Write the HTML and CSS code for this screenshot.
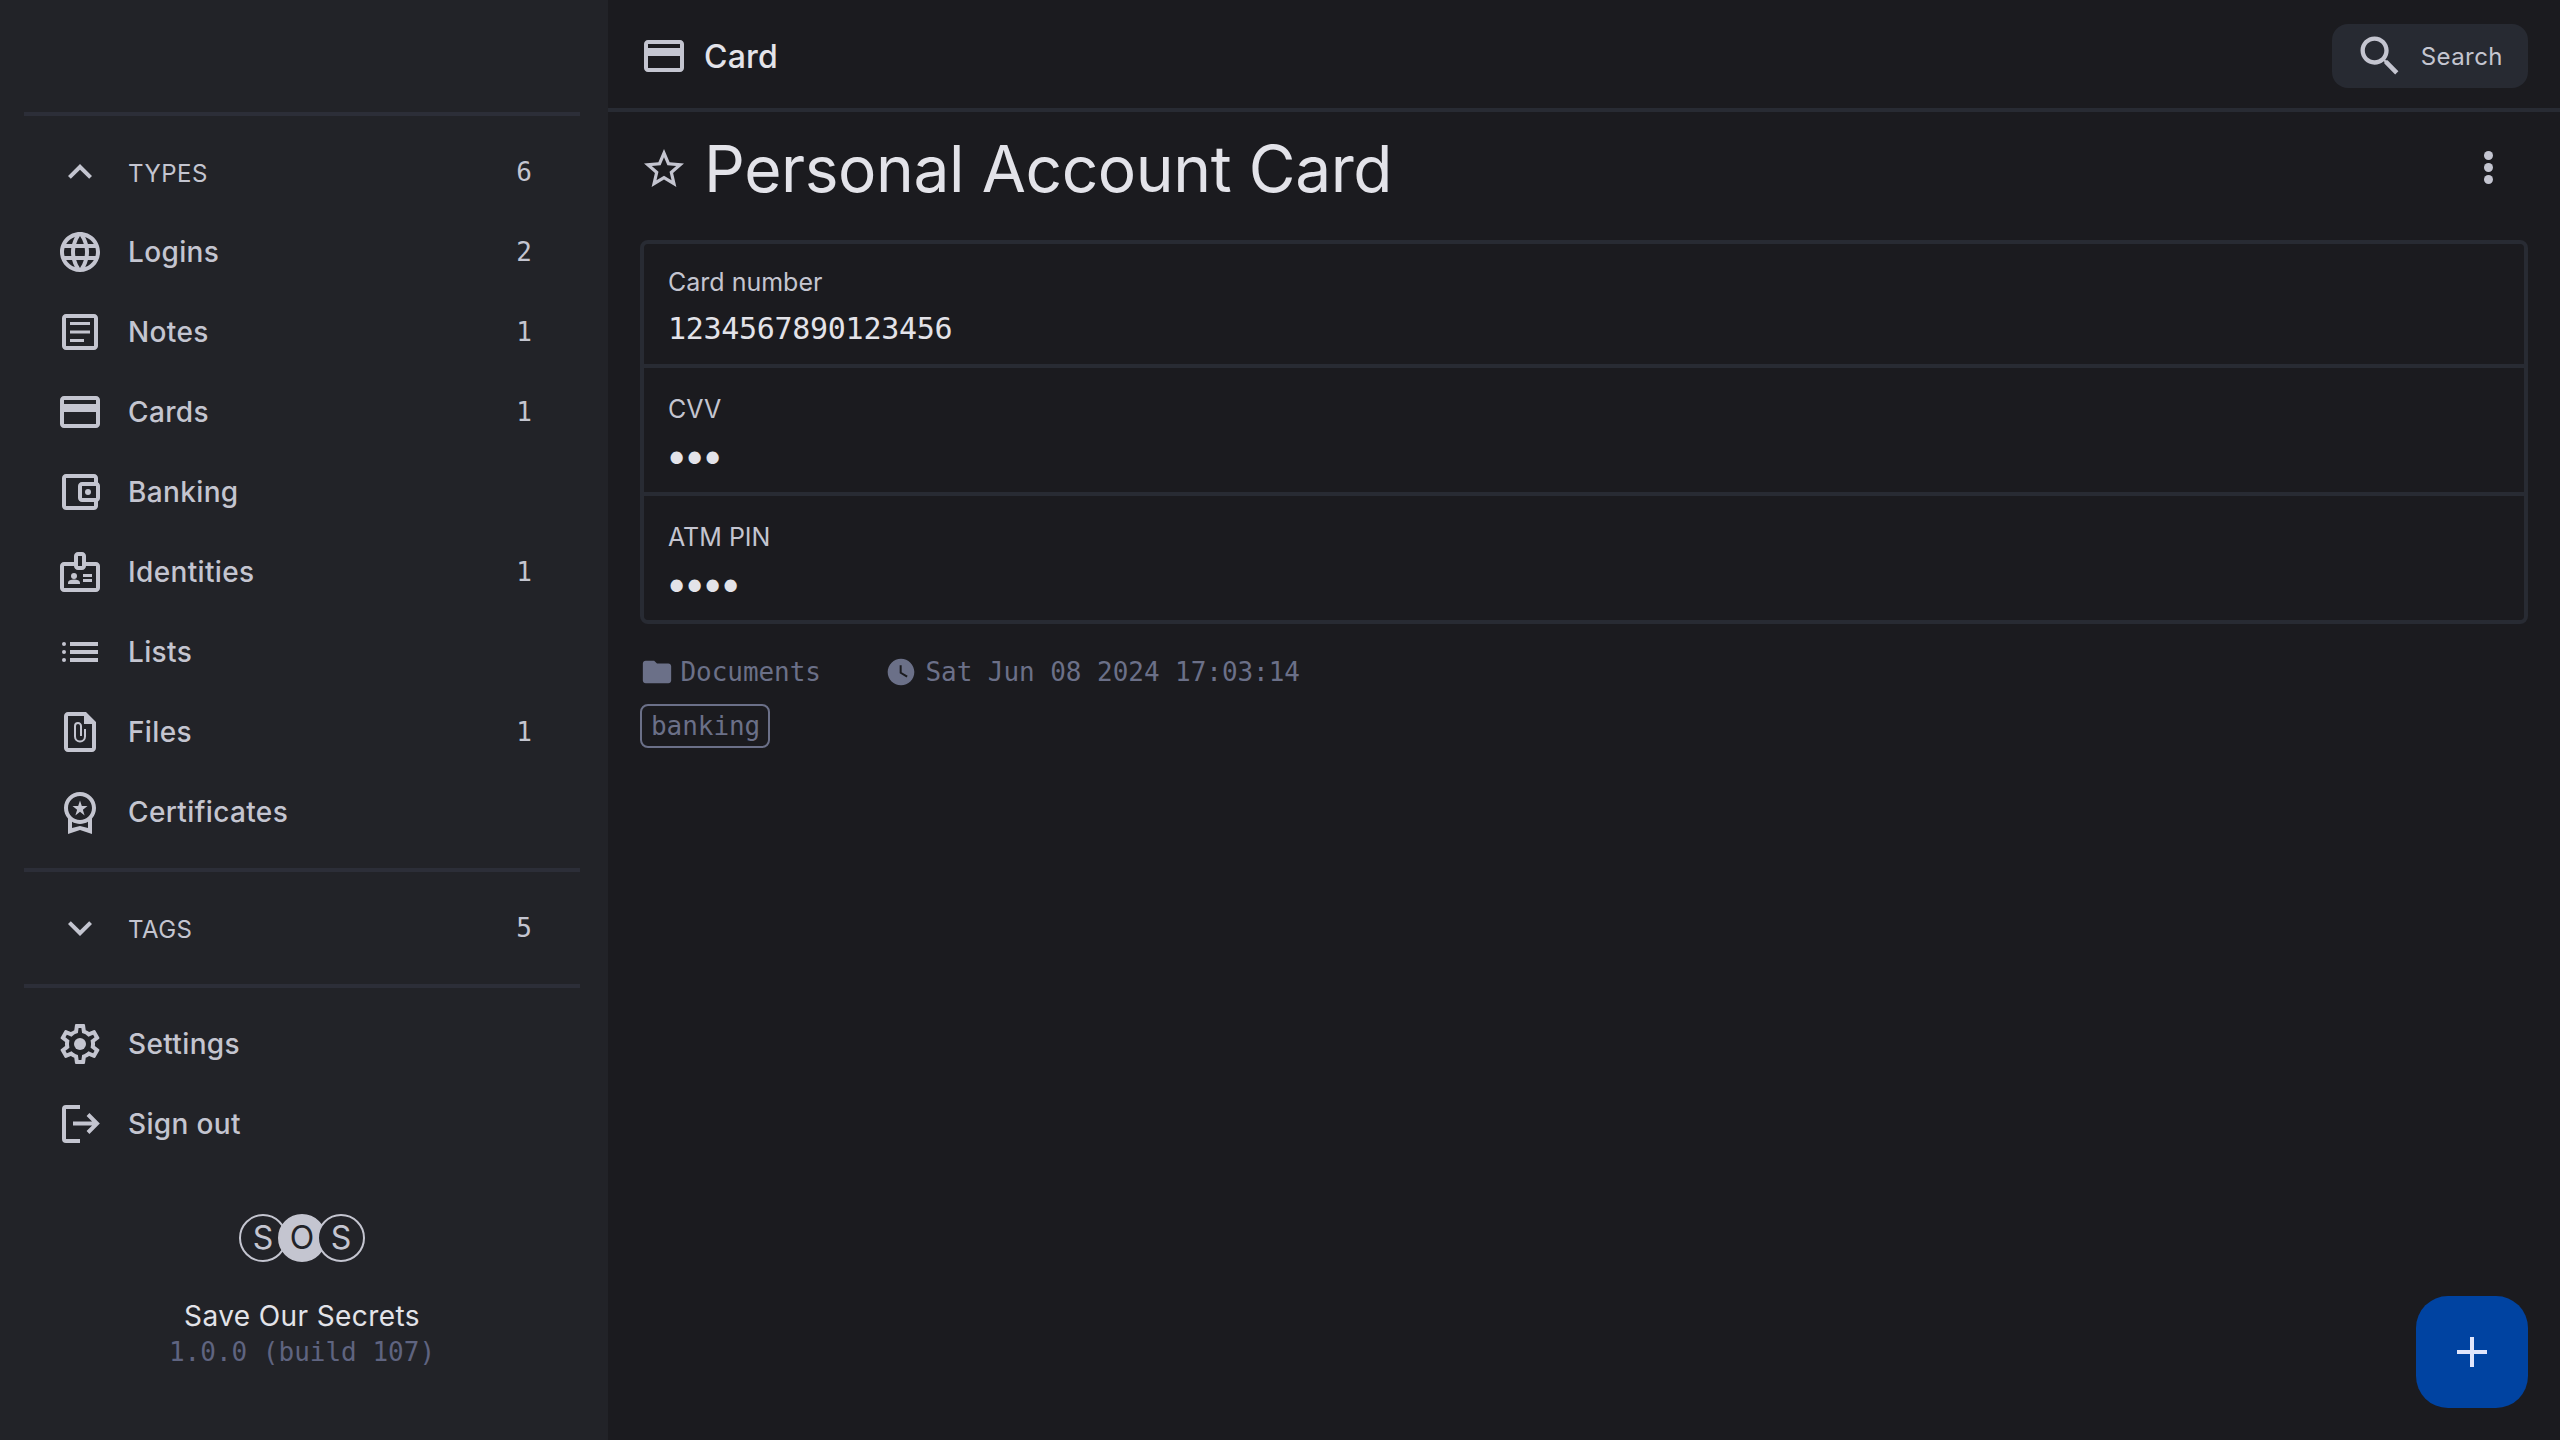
FILE: index.html
```html
<!DOCTYPE html>
<html lang="en">
<head>
<meta charset="utf-8">
<title>Save Our Secrets</title>
<link rel="stylesheet" href="styles.css">
</head>
<body>
<div class="app">
  <aside class="sidebar">
    <div class="divider"></div>
    <nav class="group">
      <div class="row section">
        <svg class="icon" viewBox="0 0 24 24"><path d="M7.41 15.41 12 10.83l4.59 4.58L18 14l-6-6-6 6z"/></svg>
        <span class="label">TYPES</span><span class="count">6</span>
      </div>
      <a class="row">
        <svg class="icon" viewBox="0 0 24 24"><path d="M11.99 2C6.47 2 2 6.48 2 12s4.47 10 9.99 10C17.52 22 22 17.52 22 12S17.52 2 11.99 2zm6.93 6h-2.95c-.32-1.25-.78-2.45-1.38-3.56 1.84.63 3.37 1.91 4.33 3.56zM12 4.04c.83 1.2 1.48 2.53 1.91 3.96h-3.82c.43-1.43 1.08-2.76 1.91-3.96zM4.26 14C4.1 13.36 4 12.69 4 12s.1-1.36.26-2h3.38c-.08.66-.14 1.32-.14 2s.06 1.34.14 2H4.26zm.82 2h2.95c.32 1.25.78 2.45 1.38 3.56-1.84-.63-3.37-1.9-4.33-3.56zm2.95-8H5.08c.96-1.66 2.49-2.93 4.33-3.56C8.81 5.55 8.35 6.75 8.03 8zM12 19.96c-.83-1.2-1.48-2.53-1.91-3.96h3.82c-.43 1.43-1.08 2.76-1.91 3.96zM14.34 14H9.66c-.09-.66-.16-1.32-.16-2s.07-1.35.16-2h4.68c.09.65.16 1.32.16 2s-.07 1.34-.16 2zm.25 5.56c.6-1.11 1.06-2.31 1.38-3.56h2.95c-.96 1.65-2.49 2.93-4.33 3.56zM16.36 14c.08-.66.14-1.32.14-2s-.06-1.34-.14-2h3.38c.16.64.26 1.31.26 2s-.1 1.36-.26 2h-3.38z"/></svg>
        <span class="label">Logins</span><span class="count">2</span>
      </a>
      <a class="row">
        <svg class="icon" viewBox="0 0 24 24"><path d="M19 5v14H5V5h14m0-2H5c-1.1 0-2 .9-2 2v14c0 1.1.9 2 2 2h14c1.1 0 2-.9 2-2V5c0-1.1-.9-2-2-2z"/><path d="M14 17H7v-1.500h7V17zm3-4.250H7v-1.500h10v1.500zM17 8.500H7V7h10v1.500z"/></svg>
        <span class="label">Notes</span><span class="count">1</span>
      </a>
      <a class="row">
        <svg class="icon" viewBox="0 0 24 24"><path d="M20 4H4c-1.110 0-1.990.89-1.990 2L2 18c0 1.110.89 2 2 2h16c1.110 0 2-.89 2-2V6c0-1.110-.89-2-2-2zm0 14H4v-6h16v6zm0-10H4V6h16v2z"/></svg>
        <span class="label">Cards</span><span class="count">1</span>
      </a>
      <a class="row">
        <svg class="icon" viewBox="0 0 24 24"><path d="M21 7.280V5c0-1.100-.9-2-2-2H5c-1.110 0-2 .9-2 2v14c0 1.100.89 2 2 2h14c1.100 0 2-.9 2-2v-2.280c.59-.35 1-.98 1-1.720V9c0-.74-.41-1.380-1-1.720zM20 9v6h-7V9h7zM5 19V5h14v2h-6c-1.100 0-2 .9-2 2v6c0 1.100.9 2 2 2h6v2H5z"/><circle cx="16" cy="12" r="1.500"/></svg>
        <span class="label">Banking</span><span class="count"></span>
      </a>
      <a class="row">
        <svg class="icon" viewBox="0 0 24 24"><path d="M20 7h-5V4c0-1.100-.9-2-2-2h-2c-1.100 0-2 .9-2 2v3H4c-1.100 0-2 .9-2 2v11c0 1.100.9 2 2 2h16c1.100 0 2-.9 2-2V9c0-1.100-.9-2-2-2zM11 4h2v5h-2V4zm9 16H4V9h5c0 1.100.9 2 2 2h2c1.100 0 2-.9 2-2h5v11z"/><circle cx="9" cy="14" r="1.500"/><path d="M11.080 16.180c-.64-.28-1.340-.43-2.080-.43s-1.440.15-2.080.43C6.360 16.420 6 16.960 6 17.570V18h6v-.43c0-.61-.36-1.150-.92-1.390zM13.500 13H18v1.500h-4.500zM13.500 15.500H18V17h-4.500z"/></svg>
        <span class="label">Identities</span><span class="count">1</span>
      </a>
      <a class="row">
        <svg class="icon" viewBox="0 0 24 24"><circle cx="4" cy="8" r="1"/><circle cx="4" cy="12" r="1"/><circle cx="4" cy="16" r="1"/><path d="M7 13h14v-2H7v2zm0 4h14v-2H7v2zM7 7v2h14V7H7z"/></svg>
        <span class="label">Lists</span><span class="count"></span>
      </a>
      <a class="row">
        <svg class="icon" viewBox="0 0 24 24"><path d="M15 2H6c-1.100 0-2 .9-2 2v16c0 1.100.9 2 2 2h12c1.100 0 2-.9 2-2V7l-5-5zM6 20V4h8v4h4v12H6z"/><path class="clip" d="M14.500 10.500v3.750a2.500 2.500 0 0 1-5 0V9a1.500 1.500 0 0 1 3 0v5"/></svg>
        <span class="label">Files</span><span class="count">1</span>
      </a>
      <a class="row">
        <svg class="icon" viewBox="0 0 24 24"><path d="M9.680 13.690 12 11.930l2.310 1.760-.88-2.850L15.750 9h-2.840L12 6.190 11.090 9H8.250l2.310 1.840-.88 2.850zM20 10c0-4.420-3.580-8-8-8s-8 3.580-8 8c0 2.030.76 3.870 2 5.280V23l6-2 6 2v-7.720c1.240-1.410 2-3.250 2-5.280zM12 4c3.310 0 6 2.690 6 6s-2.690 6-6 6-6-2.690-6-6 2.690-6 6-6zm0 15-4 1.020v-3.100c1.180.68 2.540 1.080 4 1.080s2.820-.4 4-1.080v3.100L12 19z"/></svg>
        <span class="label">Certificates</span><span class="count"></span>
      </a>
    </nav>
    <div class="divider"></div>
    <div class="group">
      <div class="row section">
        <svg class="icon" viewBox="0 0 24 24"><path d="M16.590 8.590 12 13.170 7.410 8.590 6 10l6 6 6-6z"/></svg>
        <span class="label">TAGS</span><span class="count">5</span>
      </div>
    </div>
    <div class="divider"></div>
    <div class="group">
      <a class="row">
        <svg class="icon" viewBox="0 0 24 24"><path d="M19.430 12.980c.04-.32.07-.64.07-.98 0-.34-.03-.66-.07-.98l2.110-1.650c.19-.15.24-.42.12-.64l-2-3.460c-.09-.16-.26-.25-.44-.25-.06 0-.12.01-.17.03l-2.490 1c-.52-.4-1.080-.73-1.690-.98l-.38-2.650C14.460 2.180 14.250 2 14 2h-4c-.25 0-.46.18-.49.42l-.38 2.650c-.61.25-1.170.59-1.690.98l-2.490-1c-.06-.02-.12-.03-.18-.03-.17 0-.34.09-.43.25l-2 3.460c-.13.22-.07.49.12.64l2.110 1.650c-.04.32-.07.65-.07.98 0 .33.03.66.07.98l-2.110 1.650c-.19.15-.24.42-.12.64l2 3.460c.09.16.26.25.44.25.06 0 .12-.01.17-.03l2.490-1c.52.4 1.080.73 1.690.98l.38 2.650c.03.24.24.42.49.42h4c.25 0 .46-.18.49-.42l.38-2.650c.61-.25 1.170-.59 1.690-.98l2.490 1c.06.02.12.03.18.03.17 0 .34-.09.43-.25l2-3.460c.12-.22.07-.49-.12-.64l-2.110-1.650zm-1.980-1.710c.04.31.05.52.05.73 0 .21-.02.43-.05.73l-.14 1.130.89.7 1.080.84-.7 1.210-1.270-.51-1.040-.42-.9.68c-.43.32-.84.56-1.250.73l-1.060.43-.16 1.130-.2 1.350h-1.400l-.19-1.350-.16-1.130-1.060-.43c-.43-.18-.83-.41-1.230-.71l-.91-.7-1.060.43-1.270.51-.7-1.210 1.080-.84.89-.7-.14-1.130c-.03-.31-.05-.54-.05-.74s.02-.43.05-.73l.14-1.130-.89-.7-1.080-.84.7-1.210 1.270.51 1.040.42.9-.68c.43-.32.84-.56 1.250-.73l1.060-.43.16-1.130.2-1.350h1.390l.19 1.350.16 1.130 1.060.43c.43.18.83.41 1.230.71l.91.7 1.060-.43 1.270-.51.7 1.210-1.070.85-.89.7.14 1.130z"/><circle cx="12" cy="12" r="3"/></svg>
        <span class="label">Settings</span><span class="count"></span>
      </a>
      <a class="row">
        <svg class="icon" viewBox="0 0 24 24"><path class="line" d="M12 3.500H5a1 1 0 0 0-1 1v15a1 1 0 0 0 1 1h7M8.500 11.750H20M16 7.250l4.500 4.500-4.500 4.500"/></svg>
        <span class="label">Sign out</span><span class="count"></span>
      </a>
    </div>
    <footer class="brand">
      <div class="logo">
        <span class="disc">S</span><span class="disc solid">O</span><span class="disc">S</span>
      </div>
      <div class="brand-name">Save Our Secrets</div>
      <div class="brand-version">1.0.0 (build 107)</div>
    </footer>
  </aside>

  <main class="main">
    <header class="topbar">
      <div class="topbar-title">
        <svg class="icon" viewBox="0 0 24 24"><path d="M20 4H4c-1.110 0-1.990.89-1.990 2L2 18c0 1.110.89 2 2 2h16c1.110 0 2-.89 2-2V6c0-1.110-.89-2-2-2zm0 14H4v-6h16v6zm0-10H4V6h16v2z"/></svg>
        <span>Card</span>
      </div>
      <button class="search">
        <svg class="search-icon" viewBox="0 0 24 24"><path d="M15.500 14h-.79l-.28-.27C15.410 12.590 16 11.110 16 9.500 16 5.910 13.090 3 9.500 3S3 5.910 3 9.500 5.910 16 9.500 16c1.610 0 3.090-.59 4.230-1.570l.27.28v.79l5 4.990L20.490 19l-4.990-5zm-6 0C7.010 14 5 11.990 5 9.500S7.010 5 9.500 5 14 7.010 14 9.500 11.990 14 9.500 14z"/></svg>
        <span>Search</span>
      </button>
    </header>
    <section class="content">
      <div class="title-row">
        <svg class="icon" viewBox="0 0 24 24"><path d="M22 9.240l-7.190-.62L12 2 9.190 8.630 2 9.240l5.460 4.730L5.820 21 12 17.270 18.180 21l-1.630-7.030L22 9.240zM12 15.400l-3.760 2.270 1-4.280-3.320-2.880 4.380-.38L12 6.100l1.710 4.040 4.380.38-3.320 2.880 1 4.280L12 15.400z"/></svg>
        <h1>Personal Account Card</h1>
        <div class="kebab"><i></i><i></i><i></i></div>
      </div>
      <div class="fields">
        <div class="field">
          <div class="field-label">Card number</div>
          <div class="field-value">1234567890123456</div>
        </div>
        <div class="field">
          <div class="field-label">CVV</div>
          <div class="field-value dots">•••</div>
        </div>
        <div class="field">
          <div class="field-label">ATM PIN</div>
          <div class="field-value dots">••••</div>
        </div>
      </div>
      <div class="meta">
        <svg class="meta-folder" viewBox="0 0 24 24"><path d="M10 4H4c-1.100 0-1.990.9-1.990 2L2 18c0 1.100.9 2 2 2h16c1.100 0 2-.9 2-2V8c0-1.100-.9-2-2-2h-8l-2-2z"/></svg>
        <span>Documents</span>
        <svg class="meta-clock" viewBox="0 0 24 24"><path d="M12 2C6.500 2 2 6.500 2 12s4.500 10 10 10 10-4.500 10-10S17.500 2 12 2zm4.200 14.200L11 13V7h1.500v5.200l4.500 2.700-.8 1.300z"/></svg>
        <span>Sat Jun 08 2024 17:03:14</span>
      </div>
      <div class="tags"><span class="tag">banking</span></div>
    </section>
    <button class="fab" aria-label="Add">
      <svg viewBox="0 0 30 30"><path d="M13 0h4v13h13v4H17v13h-4V17H0v-4h13z"/></svg>
    </button>
  </main>
</div>
</body>
</html>
```

FILE: styles.css
```css
* { box-sizing: border-box; }
html, body { margin: 0; height: 100%; }
body {
  background: #1b1b1f;
  color: #e3e3e9;
  font-family: Inter, "Noto Sans", sans-serif;
  overflow: hidden;
}
.app { display: flex; height: 100vh; }
.icon { width: 48px; height: 48px; flex: none; fill: #c4c5d0; }
.clip { fill: none; stroke: #c4c5d0; stroke-width: 1; }
.line { fill: none; stroke: #c4c5d0; stroke-width: 2; }

.sidebar {
  width: 608px;
  flex: none;
  background: #222328;
  padding: 112px 28px 0 24px;
  display: flex;
  flex-direction: column;
}
.divider { height: 4px; background: #2c2e38; }
.group { padding: 16px 0; display: flex; flex-direction: column; }
.row {
  height: 80px;
  display: flex;
  align-items: center;
  gap: 24px;
  padding: 0 48px 0 32px;
  color: #c4c5d0;
  font-size: 28px;
  letter-spacing: 0.36px;
  font-weight: 500;
}
.label { flex: 1; }
.section .label { font-size: 24px; font-weight: 400; letter-spacing: 0.5px; padding-top: 2px; }
.count { font-family: "DejaVu Sans Mono", monospace; font-size: 26px; font-weight: 400; letter-spacing: 0; }

.brand { display: flex; flex-direction: column; align-items: center; margin-top: 34px; }
.logo { display: flex; height: 48px; }
.disc {
  width: 48px;
  height: 48px;
  border-radius: 50%;
  border: 2px solid #c4c5d0;
  background: #222328;
  color: #c4c5d0;
  font-size: 32px;
  line-height: 44px;
  text-align: center;
  margin-left: -9px;
}
.disc:first-child { margin-left: 0; }
.disc.solid { background: #c4c5d0; color: #222328; }
.brand-name { margin-top: 30px; font-size: 28px; letter-spacing: 0.4px; line-height: 48px; color: #e3e3e9; }
.brand-version {
  margin-top: -2px;
  font-family: "DejaVu Sans Mono", monospace;
  font-size: 26px;
  line-height: 28px;
  color: #5f6480;
}

.main { flex: 1; position: relative; display: flex; flex-direction: column; min-width: 0; }
.topbar {
  height: 112px;
  border-bottom: 4px solid #282b33;
  padding: 4px 32px 0;
  display: flex;
  align-items: center;
  justify-content: space-between;
}
.topbar-title { display: flex; align-items: center; gap: 16px; font-size: 32px; font-weight: 500; letter-spacing: 0.2px; }
.search {
  height: 64px;
  border: 0;
  border-radius: 16px;
  background: #272a32;
  color: #c4c5d0;
  display: flex;
  align-items: center;
  gap: 17px;
  padding: 0 25px 0 22px;
  font: 400 24px Inter, sans-serif;
  letter-spacing: 0.45px;
}
.search-icon { width: 52px; height: 52px; flex: none; fill: #c4c5d0; margin: 0 -2px 0 0; }
.content { padding: 0 32px; }
.title-row { height: 128px; padding-bottom: 14px; display: flex; align-items: center; gap: 16px; }
.title-row h1 { flex: 1; margin: 0; font-size: 64px; font-weight: 400; line-height: 80px; letter-spacing: -0.4px; }
.kebab { width: 48px; margin: 0 16px 4px 0; display: flex; flex-direction: column; align-items: center; gap: 3px; }
.kebab i { width: 9px; height: 9px; border-radius: 50%; background: #c4c5d0; }

.fields { border: 4px solid #282b33; border-radius: 8px; }
.field { height: 128px; border-bottom: 4px solid #282b33; padding: 23px 24px 0; }
.field:first-child { height: 124px; padding-top: 20px; }
.field:last-child { height: 124px; border-bottom: 0; }
.field-label { font-size: 25px; line-height: 36px; color: #c4c5d0; }
.field-value {
  margin-top: 9px;
  font-family: "DejaVu Sans Mono", monospace;
  font-size: 30px;
  letter-spacing: -0.3px;
  line-height: 40px;
  color: #e3e3e9;
}
.field-value.dots { font-size: 42px; letter-spacing: -7.3px; margin: 13px 0 0 -4px; }
.meta {
  margin-top: 30px;
  display: flex;
  align-items: center;
  height: 36px;
  font-family: "DejaVu Sans Mono", monospace;
  font-size: 26px;
  letter-spacing: -0.05px;
  color: #6b7088;
}
.meta-folder { width: 34px; height: 34px; fill: #6b7088; margin-right: 6.500px; }
.meta-clock { width: 32px; height: 32px; fill: #6b7088; margin: 0 8px 0 64.500px; }
.tags { margin-top: 14px; display: flex; }
.tag {
  height: 44px;
  border: 2px solid #6b7088;
  border-radius: 8px;
  padding: 0 8px 0 9px;
  font-family: "DejaVu Sans Mono", monospace;
  font-size: 26px;
  letter-spacing: -0.05px;
  line-height: 40px;
  color: #6b7088;
}
.fab {
  position: absolute;
  right: 32px;
  bottom: 32px;
  width: 112px;
  height: 112px;
  border: 0;
  border-radius: 32px;
  background: #0043a1;
  display: flex;
  align-items: center;
  justify-content: center;
  padding: 0;
}
.fab svg { width: 30px; height: 30px; fill: #dfe5fb; }
```
